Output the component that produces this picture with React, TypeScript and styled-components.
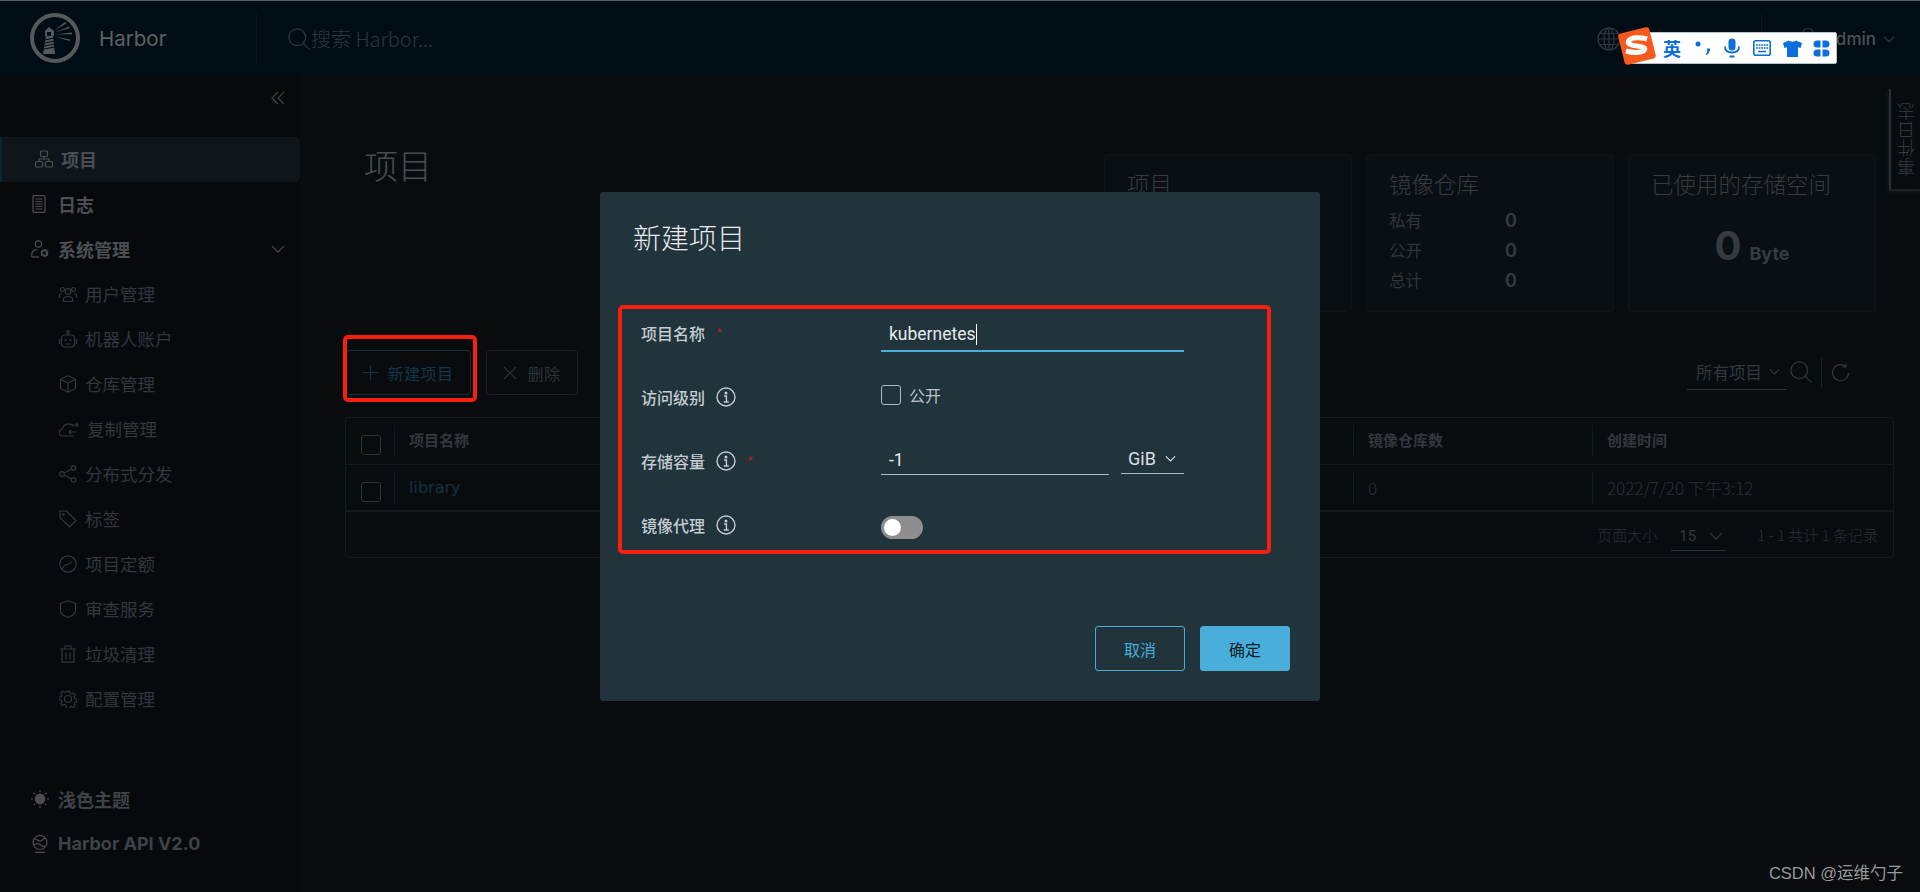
import React from "react";
import styled, { createGlobalStyle } from "styled-components";

const sans = `"Noto Sans CJK SC", "Noto Sans", sans-serif`;
const latin = `Inter, "Noto Sans CJK SC", sans-serif`;
const roboto = `Roboto, "Noto Sans CJK SC", sans-serif`;
const deja = `"DejaVu Sans", "Noto Sans CJK SC", sans-serif`;

const Global = createGlobalStyle`
  html, body { margin: 0; padding: 0; background: #080c0f; }
  * { box-sizing: border-box; }
`;

const Page = styled.div`
  position: relative;
  width: 1920px;
  height: 892px;
  overflow: hidden;
  display: flex;
  flex-direction: column;
  background: #080c0f;
  font-family: ${sans};
`;

/* ---------- header ---------- */
const Header = styled.header`
  height: 76px;
  flex: none;
  display: flex;
  align-items: center;
  padding-left: 30px;
  background: #010d14;
  border-top: 1px solid #5b6265;
`;
const Brand = styled.div`
  width: 227px;
  height: 50px;
  display: flex;
  align-items: center;
  gap: 19px;
  padding-bottom: 1px;
  border-right: 1px solid #0a161c;
  color: #5c6164;
  font: 400 20.5px ${latin};
`;
const SearchBox = styled.div`
  margin-left: 31px;
  display: flex;
  align-items: center;
  gap: 1px;
  color: #2f383d;
  font: 300 20px ${sans};
`;
const HeaderRight = styled.div`
  margin-left: auto;
  display: flex;
  align-items: center;
  height: 50px;
  color: #2f383d;
`;
const LangText = styled.span`
  margin: 0 46px 0 31px;
  width: 63px;
  font: 400 16px ${sans};
  white-space: nowrap;
  color: #3c4346;
`;
const HeaderDivider = styled.div`
  width: 1px;
  height: 50px;
  background: #0c181e;
`;
const UserBlock = styled.div`
  margin-left: 34px;
  margin-right: 25px;
  display: flex;
  align-items: center;
`;
const UserName = styled.span`
  margin: 0 7px 0 6px;
  font: 500 17px ${latin};
  color: #4c5154;
`;

/* ---------- body layout ---------- */
const Body = styled.div`
  flex: 1;
  display: flex;
  min-height: 0;
`;
const Sidebar = styled.aside`
  width: 300px;
  flex: none;
  display: flex;
  flex-direction: column;
  background: #070a0d;
`;
const CollapseRow = styled.div`
  height: 61px;
  display: flex;
  justify-content: flex-end;
  align-items: flex-start;
  padding: 15px 15px 0 0;
  color: #3c4144;
`;
const NavRow = styled.div<{ $active?: boolean; $sub?: boolean; $left?: number; $gap?: number }>`
  height: 45px;
  flex: none;
  display: flex;
  align-items: center;
  gap: ${(p) => p.$gap ?? (p.$sub ? 8 : 9)}px;
  padding-left: ${(p) => p.$left ?? (p.$sub ? 59 : 31)}px;
  padding-right: 15px;
  padding-bottom: 2px;
  color: ${(p) => (p.$sub ? "#31373c" : "#4b4f52")};
  font: ${(p) => (p.$sub ? "400 17.5px" : "700 18px")} ${sans};
  background: ${(p) => (p.$active ? "#0e151b" : "transparent")};
  border-radius: ${(p) => (p.$active ? "0 5px 5px 0" : "0")};
  box-shadow: ${(p) => (p.$active ? "inset 2px 0 0 #0c2531" : "none")};
`;
const NavFill = styled.span`
  flex: 1;
`;
const SideFoot = styled.div`
  margin-top: 55px;
`;
const FootLatin = styled.span`
  font: 700 18px ${latin};
  color: #3d4347;
`;
const ThemeLabel = styled.span`
  color: #3d4347;
`;

const Main = styled.main`
  flex: 1;
  min-width: 0;
  padding: 78px 26px 0 45px;
`;
const TopRow = styled.div`
  height: 158px;
  display: flex;
  justify-content: space-between;
  padding-right: 18px;
`;
const PageTitle = styled.h1`
  margin: 0 0 0 19px;
  font: 300 34px/22px ${sans};
  color: #4a4d4f;
`;
const Cards = styled.div`
  display: flex;
  gap: 14px;
`;
const Card = styled.section`
  width: 248px;
  padding: 13px 22px;
  background: #0a0f13;
  border: 1px solid #0e1418;
  border-radius: 3px;
`;
const CardTitle = styled.h2`
  margin: 0;
  font: 300 22.5px/30px ${sans};
  color: #363c40;
  white-space: nowrap;
`;
const StatList = styled.div`
  margin-top: 7px;
  display: grid;
  grid-template-columns: 116px auto;
  grid-auto-rows: 30px;
  align-items: center;
  font: 400 16.5px ${sans};
  color: #30363a;
`;
const StatNum = styled.span`
  font: 600 18px ${latin};
  color: #363c40;
`;
const UsageRow = styled.div`
  margin-top: 24px;
  display: flex;
  justify-content: center;
  align-items: baseline;
  gap: 8px;
  color: #363b3f;
`;
const UsageNum = styled.span`
  font: 700 40px/48px ${latin};
`;
const UsageUnit = styled.span`
  font: 700 18px ${latin};
`;

/* ---------- toolbar ---------- */
const Toolbar = styled.div`
  margin-top: 38px;
  height: 45px;
  padding-left: 1px;
  display: flex;
  align-items: center;
  gap: 15px;
`;
const GhostButton = styled.div<{ $tone: string; $edge: string; $w: number; $gap: number }>`
  width: ${(p) => p.$w}px;
  height: 45px;
  display: flex;
  align-items: center;
  justify-content: center;
  gap: ${(p) => p.$gap}px;
  border: 1px solid ${(p) => p.$edge};
  border-radius: 4px;
  color: ${(p) => p.$tone};
  font: 400 16px ${sans};
  letter-spacing: 0.5px;
`;
const FilterArea = styled.div`
  margin-left: auto;
  display: flex;
  align-items: center;
  color: #33383c;
  padding-right: 43px;
`;
const FilterSelect = styled.div`
  width: 100px;
  height: 30px;
  padding: 0 0 5px 9px;
  display: flex;
  align-items: center;
  gap: 7px;
  border-bottom: 1px solid #2d3236;
  font: 400 16.500px ${sans};
  margin-top: 4px;
  white-space: nowrap;
`;
const IconNudge = styled.span`
  display: flex;
  margin: 0 0 2px 3px;
`;
const VBar = styled.div`
  width: 1px;
  height: 30px;
  margin: 0 9px;
  background: #1b2024;
`;

/* ---------- table ---------- */
const Table = styled.div`
  margin-top: 22px;
  height: 141px;
  display: flex;
  flex-direction: column;
  border: 1px solid #14191d;
  border-radius: 4px;
`;
const TRow = styled.div<{ $thick?: boolean }>`
  height: 47px;
  flex: none;
  display: grid;
  grid-template-columns: 48px 959px 239px 1fr;
  align-items: center;
  border-bottom: ${(p) => (p.$thick ? "2px" : "1px")} solid #14191d;
`;
const Cell = styled.div<{ $head?: boolean }>`
  height: 32px;
  display: flex;
  align-items: center;
  padding-left: 14px;
  padding-bottom: ${(p) => (p.$head ? "4px" : "0")};
  border-left: 1px solid #14191d;
  color: ${(p) => (p.$head ? "#33383c" : "#2c3236")};
  font: ${(p) => (p.$head ? "700 15px" : "300 17px")} ${sans};
`;
const CheckCell = styled.div`
  display: flex;
  justify-content: center;
  padding: 8px 0 0 2px;
`;
const LibraryLink = styled.span`
  color: #143342;
  font: 400 16px ${deja};
`;
const DimCheck = styled.div`
  width: 20px;
  height: 20px;
  border: 1px solid #2e3336;
  border-radius: 3px;
`;
const TFoot = styled.div`
  flex: 1;
  display: flex;
  align-items: center;
  justify-content: flex-end;
  padding-right: 15px;
  color: #2a3034;
  font: 300 15px ${sans};
`;
const PageSize = styled.div`
  width: 55px;
  height: 30px;
  margin: 3px 31px 0 14px;
  padding-left: 8px;
  display: flex;
  align-items: center;
  gap: 13px;
  border-bottom: 1px solid #2d3236;
  font: 400 15px ${roboto};
  color: #33383c;
`;

/* ---------- dialog ---------- */
const Dialog = styled.div`
  position: absolute;
  left: 600px;
  top: 192px;
  width: 720px;
  height: 509px;
  padding: 27px 30px 0 18px;
  background: #21333b;
  border-radius: 3px;
`;
const DialogTitle = styled.h3`
  margin: 0 0 0 15px;
  font: 300 28px/36px ${sans};
  color: #e9ecee;
`;
const FormBox = styled.div`
  margin-top: 50px;
  width: 653px;
  height: 249px;
  padding: 4px 0 0 19px;
  border: 4px solid #f61f10;
  border-radius: 5px;
  display: grid;
  grid-template-columns: 240px 303px;
  grid-auto-rows: 42px;
  row-gap: 22px;
`;
const FieldLabel = styled.div`
  display: flex;
  align-items: center;
  gap: 11px;
  padding-bottom: 2px;
  color: #c3ccd1;
  font: 500 16px ${sans};
`;
const Req = styled.span`
  color: #a5261c;
  font: 400 14px ${sans};
`;
const Control = styled.div<{ $top: number }>`
  display: flex;
  align-items: flex-start;
  gap: 12px;
  margin-top: ${(p) => p.$top}px;
`;
const TextField = styled.div<{ $focus?: boolean; $w: number; $h: number }>`
  width: ${(p) => p.$w}px;
  height: ${(p) => p.$h}px;
  padding: 0 0 2px 8px;
  display: flex;
  align-items: center;
  border-bottom: ${(p) => (p.$focus ? "2px solid #49aed9" : "1px solid #adbbc4")};
  color: #e6eaec;
  font: 400 17.5px ${roboto};
`;
const Caret = styled.span`
  width: 1px;
  height: 21px;
  background: #fff;
`;
const UnitSelect = styled.div`
  width: 63px;
  height: 27px;
  padding: 0 0 3px 7px;
  display: flex;
  align-items: center;
  gap: 9px;
  border-bottom: 1px solid #adbbc4;
  color: #d9dfe2;
  font: 400 18px ${roboto};
`;
const CheckRow = styled.div`
  display: flex;
  align-items: center;
  gap: 8px;
  color: #b9c4ca;
  font: 400 16px/20px ${sans};
`;
const CheckBox = styled.div`
  width: 20px;
  height: 20px;
  border: 1px solid #adbbc4;
  border-radius: 3px;
`;
const Toggle = styled.div`
  width: 42px;
  height: 23px;
  padding: 3px;
  border-radius: 12px;
  background: #8e8e8e;
`;
const Knob = styled.div`
  width: 17px;
  height: 17px;
  border-radius: 50%;
  background: #fff;
`;
const DialogFoot = styled.div`
  margin-top: 72px;
  display: flex;
  justify-content: flex-end;
  gap: 15px;
`;
const DialogButton = styled.div<{ $primary?: boolean }>`
  width: 90px;
  height: 45px;
  display: flex;
  align-items: center;
  justify-content: center;
  border: 1px solid #49aed9;
  border-radius: 3px;
  background: ${(p) => (p.$primary ? "#49aed9" : "transparent")};
  color: ${(p) => (p.$primary ? "#0c1e26" : "#49aed9")};
  font: 400 16px ${sans};
`;

/* ---------- overlays ---------- */
const RedMark = styled.div`
  position: absolute;
  left: 343px;
  top: 335px;
  width: 134px;
  height: 67px;
  border: 4px solid #f61f10;
  border-radius: 5px;
`;
const EventTab = styled.div`
  position: absolute;
  right: 0;
  top: 89px;
  width: 31px;
  height: 102px;
  display: flex;
  align-items: center;
  justify-content: center;
  border-left: 2px solid #2b3033;
  border-bottom: 2px solid #1e2225;
  background: #080c0f;
  box-shadow: -2px 2px 3px #121619;
`;
const EventText = styled.span`
  writing-mode: vertical-rl;
  transform: rotate(180deg);
  color: #363b3f;
  font: 300 18.500px ${sans};
`;
const Ime = styled.div`
  position: absolute;
  left: 1630px;
  top: 32px;
  width: 207px;
  height: 32px;
  display: flex;
  align-items: center;
  padding-left: 32px;
  background: #fff;
  border: 1px solid #b4c3cf;
  border-radius: 2px;
  color: #0a6edb;
`;
const ImeLogo = styled.svg`
  position: absolute;
  left: -14px;
  top: -7px;
`;
const ImeChar = styled.span`
  width: 18px;
  font: 700 18px/20px ${sans};
`;
const ImeSlot = styled.span<{ $ml: number }>`
  display: flex;
  margin-left: ${(p) => p.$ml}px;
`;
const Watermark = styled.div`
  position: absolute;
  right: 17px;
  top: 863px;
  color: #9b9b9b;
  font: 400 16.500px/20px "Liberation Sans", "Noto Sans CJK SC", sans-serif;
`;

/* ---------- icons ---------- */
const Svg = ({ s = 18, w, children, sw = 1.2 }: { s?: number; w?: number; sw?: number; children: React.ReactNode }) => (
  <svg width={w ?? s} height={s} viewBox={`0 0 ${w ?? s} ${s}`} fill="none" stroke="currentColor" strokeWidth={sw} style={{ flex: "none" }}>
    {children}
  </svg>
);

const HarborLogo = () => (
  <svg width="50" height="50" viewBox="0 0 50 50" fill="none" style={{ flex: "none" }}>
    <circle cx="25" cy="25" r="23" stroke="#55595c" strokeWidth="4" />
    <path d="M19 14l5 4v5h-1l2 18H13l3-18h-1v-5z" fill="#55595c" />
    <rect x="17" y="19" width="4" height="4" fill="#010d14" />
    <path d="M15 27l9-2M14.500 30l10-2M14 33l11-2M13.500 36l11.500-2" stroke="#010d14" strokeWidth="1.200" />
    <path d="M25 17l10-8 1.500 1.500zM25 19.500l14-6 .8 1.500zM25 21.500l17-2v1.800zM25 23.500l15 3-.6 1.500z" fill="#55595c" />
  </svg>
);
const SearchIcon = ({ s = 22 }: { s?: number }) => (
  <Svg s={s}>
    <circle cx={s * 0.42} cy={s * 0.42} r={s * 0.38} />
    <path d={`M${s * 0.7} ${s * 0.7}L${s * 0.98} ${s * 0.98}`} />
  </Svg>
);
const GlobeIcon = () => (
  <Svg s={24}>
    <circle cx="12" cy="12" r="11" />
    <ellipse cx="12" cy="12" rx="5" ry="11" />
    <path d="M1 12h22M2.500 6.500h19M2.500 17.500h19M12 1v22" />
  </Svg>
);
const Chevron = ({ s = 12 }: { s?: number }) => (
  <Svg s={s}>
    <path d={`M${s * 0.08} ${s * 0.3}L${s * 0.5} ${s * 0.72}L${s * 0.92} ${s * 0.3}`} />
  </Svg>
);
const DoubleLeft = () => (
  <Svg s={14}>
    <path d="M7 1L1 7l6 6M13 1L7 7l6 6" />
  </Svg>
);
const OrgIcon = () => (
  <Svg s={18}>
    <rect x="5.500" y="1" width="7" height="5.500" rx="1" />
    <rect x="0.600" y="11.500" width="7" height="5.500" rx="1" />
    <rect x="10.500" y="11.500" width="7" height="5.500" rx="1" />
    <path d="M9 6.500v2.500M4 11.500V9h10v2.500" />
  </Svg>
);
const LogIcon = () => (
  <Svg s={18} w={16}>
    <rect x="2" y="0.600" width="12" height="16.800" rx="1" />
    <path d="M4.500 4h7M4.500 6.500h7M4.500 9h7M4.500 11.500h7M4.500 14h7" />
  </Svg>
);
const AdminIcon = () => (
  <Svg s={18}>
    <circle cx="7.500" cy="4" r="3.200" />
    <path d="M0.800 17v-3c0-2.500 2.500-4.500 5.500-4.500" />
    <path d="M1 17h7" />
    <circle cx="13.500" cy="13" r="2.500" strokeWidth="2.200" strokeDasharray="1.800 1" />
    <circle cx="13.500" cy="13" r="3.200" />
  </Svg>
);
const UsersIcon = () => (
  <Svg s={18}>
    <circle cx="9" cy="6.500" r="2.800" />
    <path d="M4.500 16.500v-2.500c0-1.500 1.500-2.500 4.500-2.500s4.500 1 4.500 2.500v2.500z" />
    <circle cx="3.500" cy="4.500" r="2" />
    <circle cx="14.500" cy="4.500" r="2" />
    <path d="M0.600 13v-2.500c0-1 1-2 2.400-2M17.400 13v-2.500c0-1-1-2-2.400-2" />
  </Svg>
);
const RobotIcon = () => (
  <Svg s={18}>
    <rect x="2.500" y="5" width="13" height="12" rx="3" />
    <circle cx="9" cy="2" r="1.300" />
    <path d="M9 3.300V5M0.600 9v5M17.400 9v5M6.500 14h5" />
    <circle cx="6.500" cy="10" r=".5" />
    <circle cx="11.500" cy="10" r=".5" />
  </Svg>
);
const BoxIcon = () => (
  <Svg s={18}>
    <path d="M9 0.800l7.500 3.500v9.400L9 17.200l-7.500-3.500V4.300zM1.500 4.300L9 8l7.500-3.700M9 8v9.200" />
  </Svg>
);
const CloudIcon = () => (
  <Svg s={18} w={20}>
    <path d="M15 16H4a3.500 3.500 0 0 1-.5-7A6 6 0 0 1 14 6" />
    <path d="M13 5h6M17 3l2 2-2 2M17 12h-7M12 10l-2 2 2 2" />
  </Svg>
);
const ShareIcon = () => (
  <Svg s={18}>
    <circle cx="14.500" cy="3" r="2.300" />
    <circle cx="3" cy="9" r="2.300" />
    <circle cx="14.500" cy="15" r="2.300" />
    <path d="M5 8l7.500-4M5 10l7.500 4" />
  </Svg>
);
const TagIcon = () => (
  <Svg s={18}>
    <path d="M1 3.500V1h6.500l9.500 9.500-6.500 6.500L1 7.500z" />
    <circle cx="4.500" cy="4.500" r=".7" />
  </Svg>
);
const GaugeIcon = () => (
  <Svg s={18}>
    <circle cx="9" cy="9" r="8.200" />
    <path d="M3.500 14c1-3 2.500-4.500 5-4.500 1.500 0 3-1 4.500-3" />
  </Svg>
);
const ShieldIcon = () => (
  <Svg s={18}>
    <path d="M9 0.800l7.500 2.700v6.500c0 3.500-3.500 6.200-7.500 7.300-4-1.100-7.500-3.800-7.500-7.300V3.500z" />
  </Svg>
);
const TrashIcon = () => (
  <Svg s={18}>
    <path d="M1 4h16M3 4v13.200h12V4M6 4V1h6v3M7 7.500v7M11 7.500v7" />
  </Svg>
);
const GearIcon = () => (
  <Svg s={18}>
    <circle cx="9" cy="9" r="3.500" />
    <path d="M7.500 1h3l.5 2.300 1.900.8 2-1.300 2 2.100-1.300 2 .8 1.900 2.300.5v2.800l-2.300.5-.8 1.900 1.300 2-2 2-2-1.300-1.900.8-.5 2.300h-3L7 15.800l-1.900-.8-2 1.300-2-2 1.300-2-.8-1.900L-.7 10V7.300L1.600 6.800l.8-1.900-1.300-2 2-2.100 2 1.300L7 1.700z" transform="translate(0.600 0.400) scale(.93)" />
  </Svg>
);
const SunIcon = () => (
  <svg width="18" height="18" viewBox="0 0 18 18" stroke="currentColor" fill="currentColor" strokeWidth="1.200" style={{ flex: "none" }}>
    <circle cx="9" cy="9" r="4.800" />
    <path d="M9 0v2M9 16v2M0 9h2M16 9h2M2.600 2.600L4 4M14 14l1.400 1.400M2.600 15.400L4 14M14 4l1.400-1.400" />
  </svg>
);
const ApiIcon = () => (
  <Svg s={18} w={16}>
    <circle cx="8" cy="7.500" r="7" />
    <path d="M2 4c3 0 4 2 6 2s3-2 5-3M1.500 10c3-2 5-2 7 0s3 2 5 1M3 17.300h10" />
  </Svg>
);
const InfoIcon = () => (
  <Svg s={20} sw={1.400}>
    <circle cx="10" cy="10" r="9" />
    <circle cx="10" cy="6" r="0.800" fill="currentColor" />
    <path d="M8 9h2.400v6M7.800 15h5" />
  </Svg>
);
const PlusIcon = () => (
  <Svg s={15}>
    <path d="M7.500 0v15M0 7.500h15" />
  </Svg>
);
const CloseIcon = () => (
  <Svg s={14}>
    <path d="M1 1l12 12M13 1L1 13" />
  </Svg>
);
const RefreshIcon = () => (
  <Svg s={20}>
    <path d="M17.500 10a8 8 0 1 1-3-6.500M15 0.500V4h-4" />
  </Svg>
);
const UserIcon = () => (
  <Svg s={24}>
    <circle cx="12" cy="7" r="5.500" />
    <path d="M2 23c0-5 4-8 10-8s10 3 10 8" />
  </Svg>
);
const MicIcon = () => (
  <svg width="16" height="20" viewBox="0 0 16 20" fill="none" style={{ flex: "none" }}>
    <rect x="4.500" y="0.500" width="7" height="12" rx="3.500" fill="#0a6edb" />
    <path d="M1 8.500c0 4 3 6 7 6s7-2 7-6" stroke="#0a6edb" strokeWidth="1.800" />
    <path d="M5.500 18.500h5" stroke="#0a6edb" strokeWidth="2" />
  </svg>
);
const KeyboardIcon = () => (
  <svg width="18" height="16" viewBox="0 0 18 16" fill="none" style={{ flex: "none" }}>
    <rect x="0.800" y="0.800" width="16.400" height="14.400" rx="2" stroke="#0a6edb" strokeWidth="1.600" />
    <path d="M3 5h12M3 8h12" stroke="#0a6edb" strokeWidth="1.500" strokeDasharray="1.800 .8" />
    <path d="M5 11.500h8" stroke="#0a6edb" strokeWidth="1.500" />
  </svg>
);
const ShirtIcon = () => (
  <svg width="19" height="17" viewBox="0 0 19 17" style={{ flex: "none" }}>
    <path d="M6 0.500c1 1.500 6 1.500 7 0l6 2.500-1.500 5-2.500-.8V17H4V7.200L1.500 8 0 3z" fill="#0a6edb" />
  </svg>
);
const CloverIcon = () => (
  <svg width="17" height="17" viewBox="0 0 17 17" style={{ flex: "none" }}>
    <path d="M4 0.500h3.500v7H4a3.500 3.500 0 0 1 0-7zM9.500 0.500H13a3.500 3.500 0 0 1 0 7H9.500zM4 9.500h3.500v7H4a3.500 3.500 0 0 1 0-7zM9.500 9.500H13a3.500 3.500 0 0 1 0 7H9.500z" fill="#0a6edb" />
  </svg>
);

const subNav: [React.ReactNode, string][] = [
  [<UsersIcon />, "用户管理"],
  [<RobotIcon />, "机器人账户"],
  [<BoxIcon />, "仓库管理"],
  [<CloudIcon />, "复制管理"],
  [<ShareIcon />, "分布式分发"],
  [<TagIcon />, "标签"],
  [<GaugeIcon />, "项目定额"],
  [<ShieldIcon />, "审查服务"],
  [<TrashIcon />, "垃圾清理"],
  [<GearIcon />, "配置管理"],
];

export default function App() {
  return (
    <Page>
      <Global />
      <Header>
        <Brand>
          <HarborLogo />
          Harbor
        </Brand>
        <SearchBox>
          <SearchIcon />
          搜索 Harbor...
        </SearchBox>
        <HeaderRight>
          <GlobeIcon />
          <LangText>中文简体</LangText>
          <HeaderDivider />
          <UserBlock>
            <UserIcon />
            <UserName>admin</UserName>
            <Chevron />
          </UserBlock>
        </HeaderRight>
      </Header>
      <Body>
        <Sidebar>
          <CollapseRow>
            <DoubleLeft />
          </CollapseRow>
          <NavRow $active $left={35} $gap={8}>
            <OrgIcon />
            <span>项目</span>
          </NavRow>
          <NavRow $gap={11}>
            <LogIcon />
            <span>日志</span>
          </NavRow>
          <NavRow>
            <AdminIcon />
            <span>系统管理</span>
            <NavFill />
            <Chevron s={14} />
          </NavRow>
          {subNav.map(([icon, label]) => (
            <NavRow $sub key={label}>
              {icon}
              <span>{label}</span>
            </NavRow>
          ))}
          <SideFoot>
            <NavRow>
              <SunIcon />
              <ThemeLabel>浅色主题</ThemeLabel>
            </NavRow>
            <NavRow $left={32} $gap={10}>
              <ApiIcon />
              <FootLatin>Harbor API V2.0</FootLatin>
            </NavRow>
          </SideFoot>
        </Sidebar>
        <Main>
          <TopRow>
            <PageTitle>项目</PageTitle>
            <Cards>
              <Card>
                <CardTitle>项目</CardTitle>
              </Card>
              <Card>
                <CardTitle>镜像仓库</CardTitle>
                <StatList>
                  <span>私有</span>
                  <StatNum>0</StatNum>
                  <span>公开</span>
                  <StatNum>0</StatNum>
                  <span>总计</span>
                  <StatNum>0</StatNum>
                </StatList>
              </Card>
              <Card>
                <CardTitle>已使用的存储空间</CardTitle>
                <UsageRow>
                  <UsageNum>0</UsageNum>
                  <UsageUnit>Byte</UsageUnit>
                </UsageRow>
              </Card>
            </Cards>
          </TopRow>
          <Toolbar>
            <GhostButton $tone="#173645" $edge="#15303b" $w={125} $gap={9}>
              <PlusIcon />
              新建项目
            </GhostButton>
            <GhostButton $tone="#2f3336" $edge="#1c2024" $w={92} $gap={10}>
              <CloseIcon />
              删除
            </GhostButton>
            <FilterArea>
              <FilterSelect>
                所有项目
                <Chevron s={11} />
              </FilterSelect>
              <IconNudge>
                <SearchIcon />
              </IconNudge>
              <VBar />
              <RefreshIcon />
            </FilterArea>
          </Toolbar>
          <Table>
            <TRow>
              <CheckCell>
                <DimCheck />
              </CheckCell>
              <Cell $head>项目名称</Cell>
              <Cell $head>镜像仓库数</Cell>
              <Cell $head>创建时间</Cell>
            </TRow>
            <TRow $thick>
              <CheckCell>
                <DimCheck />
              </CheckCell>
              <Cell>
                <LibraryLink>library</LibraryLink>
              </Cell>
              <Cell>0</Cell>
              <Cell>2022/7/20 下午3:12</Cell>
            </TRow>
            <TFoot>
              页面大小
              <PageSize>
                15
                <Chevron s={14} />
              </PageSize>
              1 - 1 共计 1 条记录
            </TFoot>
          </Table>
        </Main>
      </Body>

      <RedMark />
      <EventTab>
        <EventText>事件日志</EventText>
      </EventTab>

      <Dialog>
        <DialogTitle>新建项目</DialogTitle>
        <FormBox>
          <FieldLabel>
            项目名称 <Req>*</Req>
          </FieldLabel>
          <Control $top={7}>
            <TextField $focus $w={303} $h={32}>
              kubernetes
              <Caret />
            </TextField>
          </Control>
          <FieldLabel>
            访问级别 <InfoIcon />
          </FieldLabel>
          <Control $top={8}>
            <CheckRow>
              <CheckBox />
              公开
            </CheckRow>
          </Control>
          <FieldLabel>
            存储容量 <InfoIcon /> <Req>*</Req>
          </FieldLabel>
          <Control $top={6}>
            <TextField $w={228} $h={28}>
              -1
            </TextField>
            <UnitSelect>
              GiB
              <Chevron s={11} />
            </UnitSelect>
          </Control>
          <FieldLabel>
            镜像代理 <InfoIcon />
          </FieldLabel>
          <Control $top={11}>
            <Toggle>
              <Knob />
            </Toggle>
          </Control>
        </FormBox>
        <DialogFoot>
          <DialogButton>取消</DialogButton>
          <DialogButton $primary>确定</DialogButton>
        </DialogFoot>
      </Dialog>

      <Ime>
        <ImeLogo width="40" height="40" viewBox="0 0 40 40">
          <rect x="4" y="4" width="32" height="32" rx="3" fill="#f8591c" transform="rotate(-14 20 20)" />
          <path d="M30 13c-7-2-15-2-18 1.500s3 5 8 5.500 10 2 7 4.500-11 2.500-18 .5" fill="none" stroke="#fff" strokeWidth="5" />
        </ImeLogo>
        <ImeChar>英</ImeChar>
        <ImeSlot $ml={14}>
          <svg width="16" height="18" viewBox="0 0 16 18">
            <circle cx="3" cy="5" r="2.500" fill="#0a6edb" />
            <path d="M12 9.500h3c0 3-1 5-3.500 6.500l-.8-1c1-.7 1.600-1.600 1.800-2.500H12z" fill="#0a6edb" />
          </svg>
        </ImeSlot>
        <ImeSlot $ml={13}>
          <MicIcon />
        </ImeSlot>
        <ImeSlot $ml={13}>
          <KeyboardIcon />
        </ImeSlot>
        <ImeSlot $ml={12}>
          <ShirtIcon />
        </ImeSlot>
        <ImeSlot $ml={11}>
          <CloverIcon />
        </ImeSlot>
      </Ime>
      <Watermark>CSDN @运维勺子</Watermark>
    </Page>
  );
}
